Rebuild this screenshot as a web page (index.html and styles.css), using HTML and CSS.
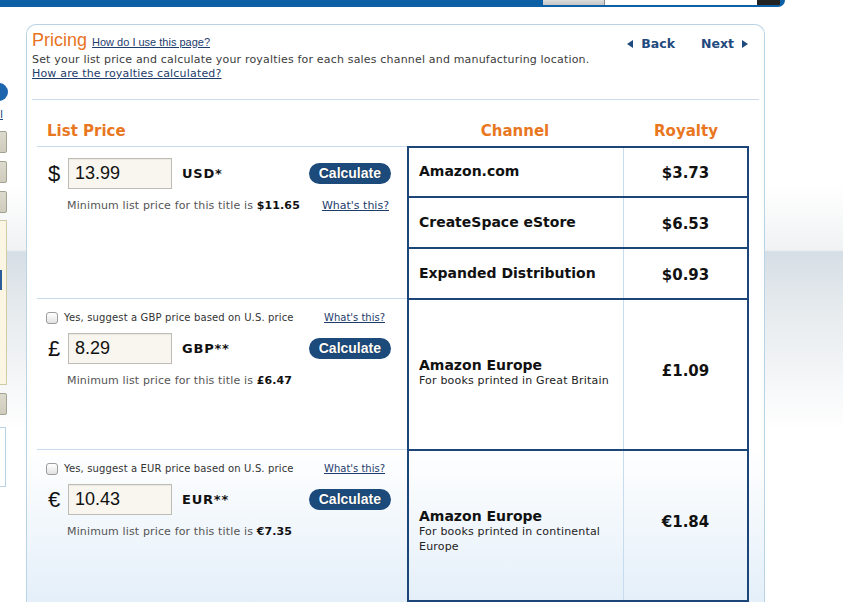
FILE: index.html
```html
<!DOCTYPE html>
<html lang="en">
<head>
<meta charset="utf-8">
<title>Pricing</title>
<link rel="stylesheet" href="styles.css">
</head>
<body>
<header class="topbar">
  <div class="search">
    <span class="search-scope"></span>
    <span class="search-field"></span>
    <span class="search-go"></span>
  </div>
</header>

<div class="page">
  <aside class="sidebar">
    <span class="side-dot"></span>
    <a class="side-link" href="#">Detail</a>
    <span class="side-tile"></span>
    <span class="side-tile"></span>
    <span class="side-tile"></span>
    <div class="side-panel">
      <span class="side-active"></span>
    </div>
    <span class="side-tile"></span>
    <div class="side-box"></div>
  </aside>

  <main class="card">
    <div class="intro">
      <div class="intro-text">
        <h1 class="title">Pricing <a class="help" href="#">How do I use this page?</a></h1>
        <p class="lead">Set your list price and calculate your royalties for each sales channel and manufacturing location.<br><a href="#">How are the royalties calculated?</a></p>
      </div>
      <nav class="steps">
        <a class="step step-back" href="#">Back</a>
        <a class="step step-next" href="#">Next</a>
      </nav>
    </div>

    <div class="price-head">
      <span class="head-list">List Price</span>
      <span class="head-center">Channel</span>
      <span class="head-center">Royalty</span>
    </div>

    <section class="group">
      <div class="price-cell price-cell-us">
        <div class="price-row">
          <span class="currency">$</span>
          <input class="price-input" type="text" value="13.99">
          <span class="code">USD*</span>
          <button class="calc" type="button">Calculate</button>
        </div>
        <div class="min-row">
          <span>Minimum list price for this title is <b>$11.65</b></span>
          <a class="whats" href="#">What's this?</a>
        </div>
      </div>
      <div class="channels">
        <div class="channel-row">
          <div class="ch"><span class="ch-name">Amazon.com</span></div>
          <div class="roy">$3.73</div>
        </div>
        <div class="channel-row channel-row-tall1">
          <div class="ch"><span class="ch-name">CreateSpace eStore</span></div>
          <div class="roy">$6.53</div>
        </div>
        <div class="channel-row channel-row-tall1">
          <div class="ch"><span class="ch-name">Expanded Distribution</span></div>
          <div class="roy">$0.93</div>
        </div>
      </div>
    </section>

    <section class="group">
      <div class="price-cell">
        <label class="check-row">
          <input class="check" type="checkbox">
          <span>Yes, suggest a GBP price based on U.S. price</span>
          <a class="whats-small" href="#">What's this?</a>
        </label>
        <div class="price-row price-row-spaced">
          <span class="currency">£</span>
          <input class="price-input" type="text" value="8.29">
          <span class="code">GBP**</span>
          <button class="calc" type="button">Calculate</button>
        </div>
        <div class="min-row">
          <span>Minimum list price for this title is <b>£6.47</b></span>
        </div>
      </div>
      <div class="channels">
        <div class="channel-row channel-row-big">
          <div class="ch ch-gb">
            <span class="ch-name">Amazon Europe</span>
            <span class="ch-note">For books printed in Great Britain</span>
          </div>
          <div class="roy roy-big">£1.09</div>
        </div>
      </div>
    </section>

    <section class="group group-last">
      <div class="price-cell">
        <label class="check-row">
          <input class="check" type="checkbox">
          <span>Yes, suggest a EUR price based on U.S. price</span>
          <a class="whats-small" href="#">What's this?</a>
        </label>
        <div class="price-row price-row-spaced">
          <span class="currency">€</span>
          <input class="price-input" type="text" value="10.43">
          <span class="code">EUR**</span>
          <button class="calc" type="button">Calculate</button>
        </div>
        <div class="min-row">
          <span>Minimum list price for this title is <b>€7.35</b></span>
        </div>
      </div>
      <div class="channels channels-last">
        <div class="channel-row channel-row-big">
          <div class="ch ch-eu">
            <span class="ch-name">Amazon Europe</span>
            <span class="ch-note">For books printed in continental Europe</span>
          </div>
          <div class="roy roy-big">€1.84</div>
        </div>
      </div>
    </section>
  </main>
</div>
</body>
</html>
```

FILE: styles.css
```css
html {
  background: #fff;
}

body {
  margin: 0;
  font-family: "DejaVu Sans", Verdana, sans-serif;
  color: #222;
  background-color: #fff;
  background-image: linear-gradient(180deg,
    #fff 0, #fff 185px,
    #f0f2f3 250px, #d6dee5 252px,
    #e4e9ed 300px, #eef1f3 350px,
    #f8f9fa 395px, #fff 430px);
  background-repeat: no-repeat;
  min-height: 602px;
}

a {
  color: #1e3c6c;
}

/* ---------- top bar with the search box ---------- */
.topbar {
  width: 785px;
  height: 7px;
  background: #0d5fa6;
  border-bottom-right-radius: 7px;
}

.search {
  display: flex;
  height: 5px;
  margin-left: 543px;
}

.search-scope {
  width: 61px;
  background: linear-gradient(#dcdcdc, #c6c6c6);
  border-right: 1px solid #8a8a8a;
}

.search-field {
  width: 152px;
  background: #fff;
}

.search-go {
  width: 23px;
  background: #222;
}

/* ---------- page ---------- */
.page {
  display: flex;
  align-items: flex-start;
  margin-top: 17px;
}

/* left navigation, scrolled mostly out of view */
.sidebar {
  flex: none;
  width: 8px;
  overflow: hidden;
  padding-top: 59px;
  display: flex;
  flex-direction: column;
  align-items: flex-end;
}

.side-dot {
  flex: none;
  width: 18px;
  height: 18px;
  border-radius: 50%;
  background: #1d66ad;
}

.side-link {
  margin-top: 7px;
  margin-right: 5px;
  font-size: 11px;
  line-height: 13px;
  color: #1d4a8a;
  white-space: nowrap;
}

.side-tile {
  flex: none;
  width: 40px;
  height: 22px;
  box-sizing: border-box;
  margin-top: 8px;
  margin-right: 1px;
  border: 1px solid #a4a290;
  border-radius: 2px;
  background: linear-gradient(#dcdacd, #cfccbd);
}

.side-link + .side-tile {
  margin-top: 10px;
}

.side-panel {
  flex: none;
  width: 40px;
  height: 165px;
  box-sizing: border-box;
  margin-top: 7px;
  margin-right: 1px;
  border: 1px solid #d2cba8;
  background: #fbf6e3;
  display: flex;
  flex-direction: column;
  align-items: flex-end;
}

.side-active {
  width: 20px;
  height: 20px;
  margin-top: 49px;
  margin-right: 4px;
  background: #2b5e98;
}

.side-box {
  flex: none;
  width: 40px;
  height: 60px;
  box-sizing: border-box;
  margin-top: 12px;
  margin-right: 2px;
  border: 1px solid #b9d3e6;
  background: #fff;
}

/* ---------- card ---------- */
.card {
  flex: none;
  width: 739px;
  min-height: 578px;
  box-sizing: border-box;
  margin-left: 18px;
  border: 1px solid #b9d3e6;
  border-bottom: none;
  border-radius: 10px 10px 0 0;
  background: #fff;
}

.intro {
  display: flex;
  justify-content: space-between;
  margin: 0 5px;
  padding: 5px 0 18px;
  border-bottom: 1px solid #cadcec;
}

.title {
  margin: 0;
  height: 20px;
  font-family: "Liberation Sans", Arial, sans-serif;
  font-size: 18px;
  line-height: 20px;
  font-weight: normal;
  color: #e8731e;
}

.help {
  font-size: 11px;
  line-height: 11px;
  color: #1e3c6c;
}

.lead {
  margin: 3px 0 0;
  font-size: 11px;
  line-height: 14px;
  letter-spacing: 0.18px;
  color: #3c3c3c;
}

.steps {
  display: flex;
  gap: 26px;
  margin: 6px 11px 0 0;
  font-size: 12.5px;
  line-height: 16px;
  font-weight: bold;
}

.step {
  display: flex;
  align-items: center;
  gap: 8px;
  height: 16px;
  color: #1f4a7d;
  text-decoration: none;
}

.step-back::before,
.step-next::after {
  content: "";
  width: 0;
  height: 0;
  border-style: solid;
}

.step-back::before {
  border-width: 4.5px 6px 4.5px 0;
  border-color: transparent #1f4a7d transparent transparent;
}

.step-next::after {
  border-width: 4.5px 0 4.5px 6px;
  border-color: transparent transparent transparent #1f4a7d;
}

/* ---------- column headings ---------- */
.price-head {
  display: grid;
  grid-template-columns: 370px 216px 126px;
  padding: 22px 15px 6px 10px;
  font-size: 15px;
  line-height: 18px;
  font-weight: bold;
  color: #e8771f;
}

.head-list {
  padding-left: 10px;
}

.head-center {
  text-align: center;
}

/* ---------- price groups ---------- */
.group {
  display: grid;
  grid-template-columns: 370px 342px;
  padding: 0 15px 0 10px;
}

.group-last {
  background: linear-gradient(#fff, #e4eff9);
}

.price-cell {
  border-top: 1px solid #c8dcef;
  padding: 12px 16px 0 9px;
}

.price-cell-us {
  padding-top: 11px;
}

.price-row {
  display: flex;
  align-items: center;
  height: 31px;
  padding-left: 2px;
}

.price-row-spaced {
  margin-top: 8px;
}

.currency {
  width: 20px;
  font-family: "Liberation Sans", Arial, sans-serif;
  font-size: 22px;
  color: #111;
}

.price-input {
  width: 104px;
  height: 31px;
  box-sizing: border-box;
  margin: 0;
  padding: 0 6px;
  border: 1px solid #bdbcb6;
  background: #f8f6ef;
  box-shadow: inset 0 1px 1px rgba(0, 0, 0, 0.06);
  font-family: "Liberation Sans", Arial, sans-serif;
  font-size: 18px;
  color: #111;
}

.code {
  margin-left: 10px;
  font-size: 13px;
  font-weight: bold;
  letter-spacing: 0.8px;
  color: #111;
}

.calc {
  margin-left: auto;
  height: 21px;
  padding: 0 10px;
  border: none;
  border-radius: 11px;
  background: #1b4a7b;
  color: #fff;
  font-family: "Liberation Sans", Arial, sans-serif;
  font-size: 14px;
  line-height: 21px;
  font-weight: bold;
  text-shadow: 0 0 1px rgba(0, 0, 0, 0.6);
}

.min-row {
  display: flex;
  justify-content: space-between;
  margin-top: 10px;
  padding-left: 21px;
  font-size: 11px;
  line-height: 14px;
  letter-spacing: 0.14px;
  color: #555;
}

.min-row b {
  color: #111;
}

.whats {
  margin-right: 2px;
  letter-spacing: 0;
  color: #1e3c6c;
}

.check-row {
  display: flex;
  align-items: center;
  height: 14px;
  font-size: 10px;
  line-height: 14px;
  letter-spacing: 0.14px;
  color: #333;
}

.check {
  appearance: none;
  -webkit-appearance: none;
  width: 12px;
  height: 12px;
  margin: 0 6px 0 0;
  border: 1px solid #9c9c9c;
  border-radius: 3px;
  background: linear-gradient(#fff, #e2e2e2);
}

.whats-small {
  margin-left: auto;
  margin-right: 6px;
  letter-spacing: 0;
  color: #1e3c6c;
}

/* ---------- channel / royalty table ---------- */
.channels {
  border: 2px solid #1c4677;
  border-bottom: none;
}

.channels-last {
  border-bottom: 2px solid #1c4677;
}

.channel-row {
  display: grid;
  grid-template-columns: 214px 124px;
  height: 48px;
}

.channel-row + .channel-row {
  border-top: 2px solid #1c4677;
}

.channel-row-tall1 {
  height: 49px;
}

.channel-row-big {
  height: 149px;
}

.ch {
  display: flex;
  flex-direction: column;
  justify-content: center;
  padding: 0 10px 2px;
}

.ch-gb {
  padding-bottom: 4px;
}

.ch-eu {
  padding: 11px 10px 0;
}

.ch-name {
  font-size: 14px;
  line-height: 16px;
  font-weight: bold;
  color: #111;
}

.ch-note {
  font-size: 11px;
  line-height: 15px;
  letter-spacing: 0.18px;
  color: #222;
}

.roy {
  display: flex;
  align-items: center;
  justify-content: center;
  padding-top: 2px;
  border-left: 1px solid #c8dcef;
  font-size: 15px;
  line-height: 18px;
  font-weight: bold;
  color: #111;
}

.roy-big {
  padding: 0 0 8px;
}
```
